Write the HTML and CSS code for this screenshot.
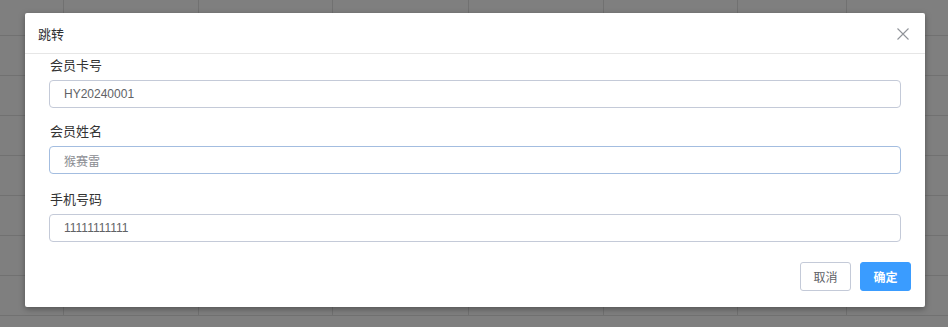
FILE: index.html
```html
<!DOCTYPE html>
<html lang="zh-CN">
<head>
    <meta charset="UTF-8">
    <title>跳转</title>
    <meta name="viewport" content="width=device-width, initial-scale=1">
    <link rel="stylesheet" href="styles.css">
</head>
<body>
    <div class="table-bg">
        <div class="row first"><div></div><div></div><div></div><div></div><div></div><div></div><div></div><div></div></div>
        <div class="row"><div></div><div></div><div></div><div></div><div></div><div></div><div></div><div></div></div>
        <div class="row"><div></div><div></div><div></div><div></div><div></div><div></div><div></div><div></div></div>
        <div class="row"><div></div><div></div><div></div><div></div><div></div><div></div><div></div><div></div></div>
        <div class="row"><div></div><div></div><div></div><div></div><div></div><div></div><div></div><div></div></div>
        <div class="row"><div></div><div></div><div></div><div></div><div></div><div></div><div></div><div></div></div>
        <div class="row"><div></div><div></div><div></div><div></div><div></div><div></div><div></div><div></div></div>
        <div class="row"><div></div><div></div><div></div><div></div><div></div><div></div><div></div><div></div></div>
    </div>

    <div class="dialog">
        <div class="dialog-header">
            <span class="dialog-title">跳转</span>
            <button class="close-btn" aria-label="关闭">
                <svg width="12" height="12" viewBox="0 0 12 12">
                    <path d="M0.5 0.5 L11.5 11.5 M11.5 0.5 L0.5 11.5" stroke="#909399" stroke-width="1.1" fill="none"/>
                </svg>
            </button>
        </div>
        <div class="dialog-body">
            <div class="field">
                <label>会员卡号</label>
                <input type="text" value="HY20240001">
            </div>
            <div class="field">
                <label>会员姓名</label>
                <input type="text" class="focused" value="猴赛雷">
            </div>
            <div class="field">
                <label>手机号码</label>
                <input type="text" value="11111111111">
            </div>
        </div>
        <div class="dialog-footer">
            <button class="btn btn-cancel">取消</button>
            <button class="btn btn-primary">确定</button>
        </div>
    </div>
</body>
</html>
```

FILE: styles.css
```css
html, body {
    margin: 0;
    padding: 0;
    height: 100%;
    overflow: hidden;
}
body {
    font-family: "Liberation Sans", "Noto Sans CJK SC", sans-serif;
    background-color: #7f7f7f;
    color: #303133;
    font-size: 13px;
}
.table-bg {
    display: flex;
    flex-direction: column;
}
.row {
    display: grid;
    grid-template-columns: 64px 135px 134px 136px 135px 134px 109px 1fr;
    height: 39px;
    border-bottom: 1px solid #717171;
}
.row.first {
    height: 35px;
}
.row div {
    border-right: 1px solid #717171;
}
.row div:last-child {
    border-right: none;
}
.dialog {
    position: absolute;
    left: 25px;
    top: 13px;
    width: 900px;
    background: #fff;
    border-radius: 2px;
    box-shadow: 0 2px 6px rgba(0, 0, 0, 0.35);
}
.dialog-header {
    height: 40px;
    display: flex;
    align-items: center;
    justify-content: space-between;
    padding: 0 16px 0 13px;
    border-bottom: 1px solid #e6e6e6;
}
.dialog-title {
    font-size: 13px;
    color: #303133;
}
.close-btn {
    border: none;
    background: none;
    padding: 0;
    cursor: pointer;
    display: flex;
    margin-top: 1px;
}
.dialog-body {
    padding: 2px 24px 0 24px;
    display: flex;
    flex-direction: column;
    gap: 14px;
}
.field {
    display: flex;
    flex-direction: column;
    gap: 4px;
}
.field label {
    line-height: 20px;
    font-size: 13px;
    color: #333;
    padding-left: 1px;
}
.field input {
    box-sizing: border-box;
    height: 28px;
    width: 100%;
    padding: 0 14px;
    border: 1px solid #c4cad8;
    border-radius: 4px;
    font-family: "Liberation Sans", "Noto Sans CJK SC", sans-serif;
    font-size: 12px;
    color: #606266;
    outline: none;
}
.field input.focused {
    border-color: #a3bde0;
    color: #8a8c91;
}
.field:last-child {
    margin-top: 2px;
}
.dialog-footer {
    display: flex;
    justify-content: flex-end;
    gap: 9px;
    padding: 20px 14px 16px 0;
}
.btn {
    box-sizing: border-box;
    width: 51px;
    height: 29px;
    border-radius: 3px;
    font-family: "Liberation Sans", "Noto Sans CJK SC", sans-serif;
    font-size: 12px;
    cursor: pointer;
}
.btn-cancel {
    background: #fff;
    border: 1px solid #c4cad8;
    color: #606266;
}
.btn-primary {
    background: #3a9cff;
    border: 1px solid #3a9cff;
    color: #fff;
    font-weight: bold;
}
```
